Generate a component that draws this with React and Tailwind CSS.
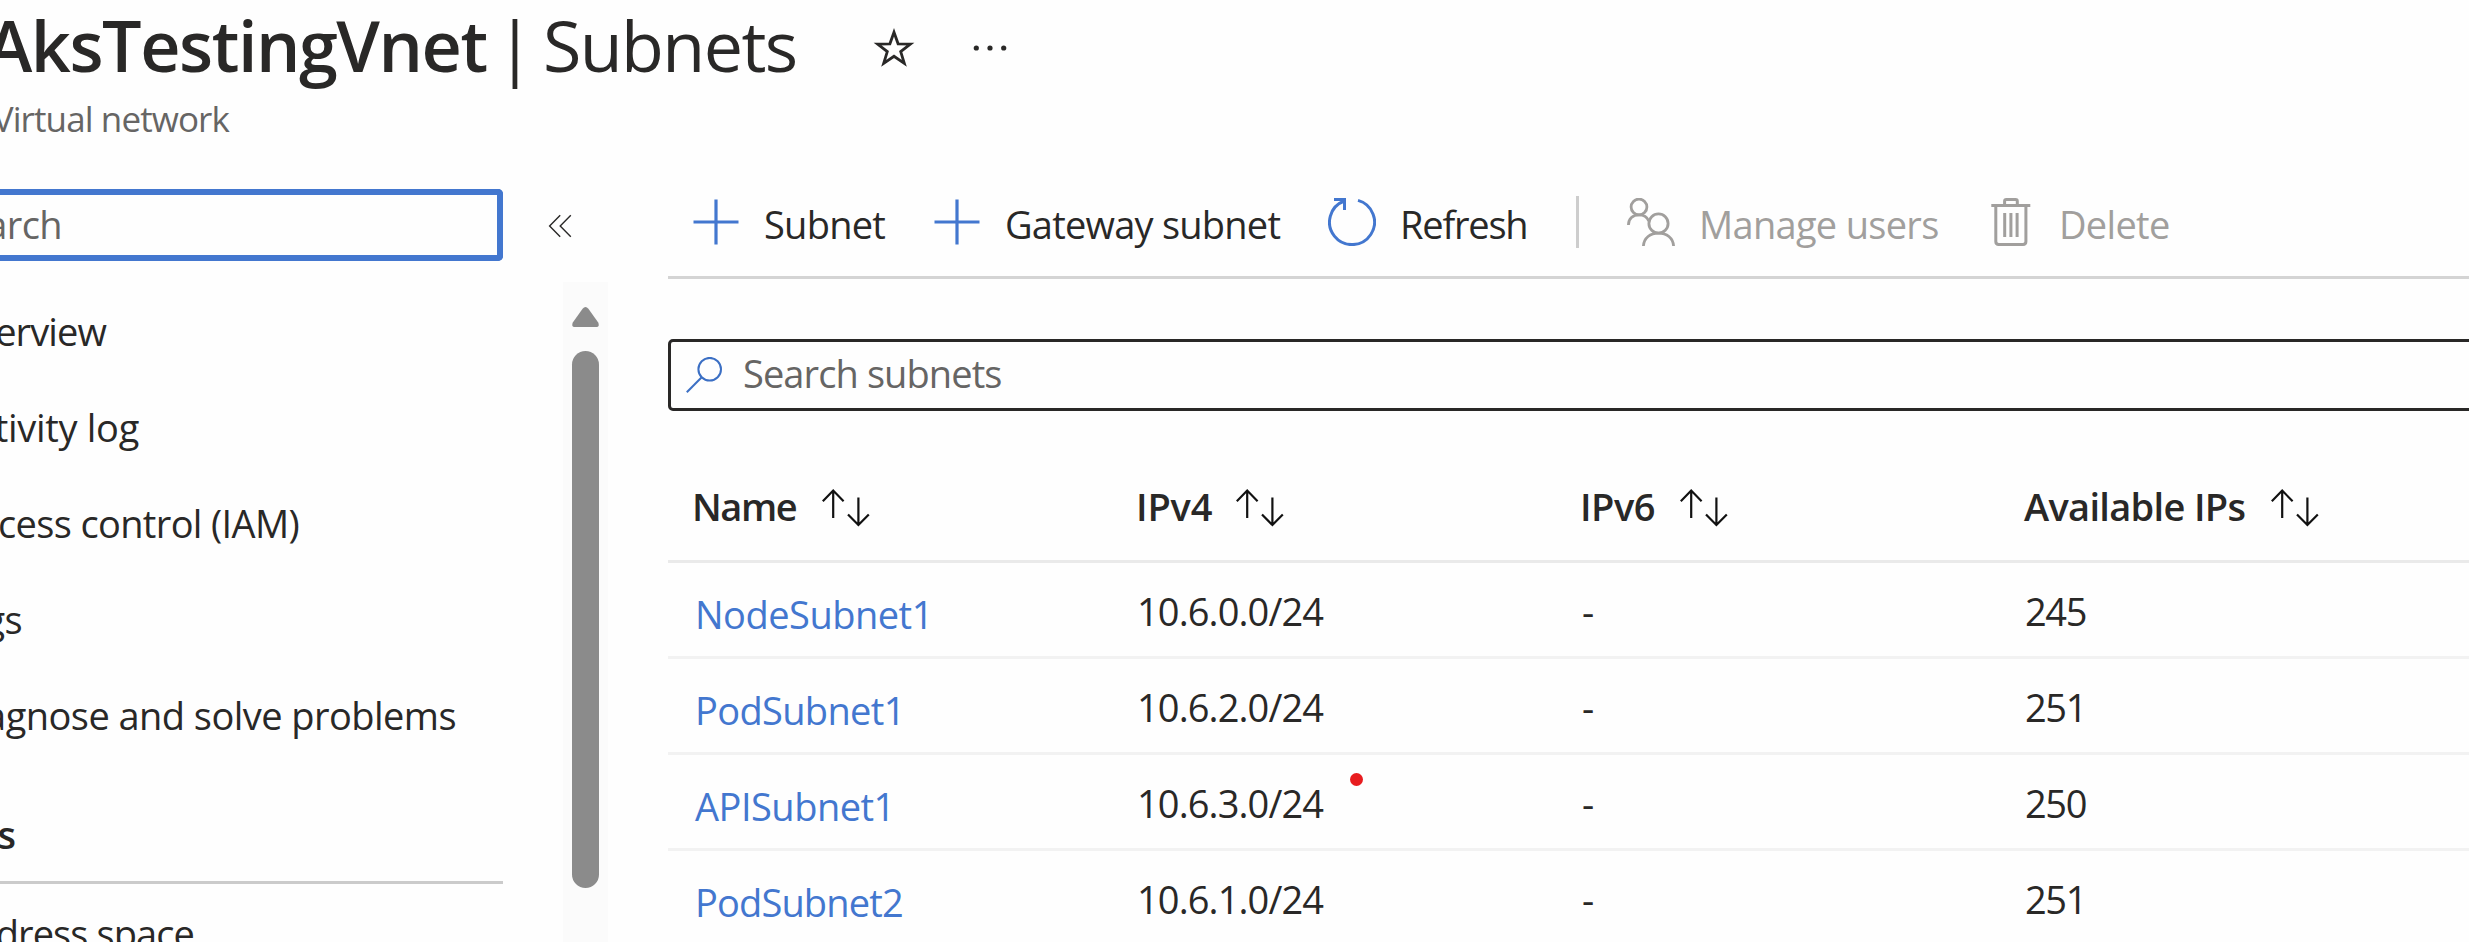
import React from "react";

const NAV_ITEMS = [
  { label: "erview", width: "w-[106px]", tracking: "tracking-[-0.9px]" },
  { label: "tivity log", width: "w-[139px]", tracking: "tracking-[-0.3px]" },
  { label: "cess control (IAM)", width: "w-[299px]", tracking: "tracking-[-0.65px]" },
  { label: "gs", width: "w-[22px]", tracking: "tracking-[-0.6px]" },
  { label: "agnose and solve problems", width: "w-[456px]", tracking: "tracking-[-0.55px]" },
];

const COLUMNS = [
  { label: "Name", tracking: "tracking-[-1.4px]", gap: "gap-[26px]" },
  { label: "IPv4", tracking: "tracking-[-0.2px]", gap: "gap-[24px]" },
  { label: "IPv6", tracking: "tracking-[-0.5px]", gap: "gap-[25px]" },
  { label: "Available IPs", tracking: "tracking-[-0.68px]", gap: "gap-[26px]" },
];

const ROWS = [
  { name: "NodeSubnet1", tracking: "tracking-[-0.5px]", ipv4: "10.6.0.0/24", ips: "245" },
  { name: "PodSubnet1", tracking: "tracking-[-0.65px]", ipv4: "10.6.2.0/24", ips: "251" },
  { name: "APISubnet1", tracking: "tracking-[-0.5px]", ipv4: "10.6.3.0/24", ips: "250", marker: true },
  { name: "PodSubnet2", tracking: "tracking-[-0.85px]", ipv4: "10.6.1.0/24", ips: "251" },
];

const GRID = "grid grid-cols-[444px_444px_444px_1fr] pl-[24px]";

function StarIcon() {
  return (
    <svg className="h-12 w-12" viewBox="0 0 48 48" fill="none" stroke="#292827" strokeWidth="2.8" strokeMiterlimit="10">
      <path d="M24 8.2 L28.1 19.8 L40.4 20.1 L30.7 27.6 L34.3 39.4 L24 32.3 L13.7 39.4 L17.3 27.6 L7.6 20.1 L19.9 19.8 Z" />
    </svg>
  );
}

function MoreIcon() {
  return (
    <svg className="h-3 w-9" viewBox="0 0 36 12" fill="#292827">
      <circle cx="4.3" cy="6" r="2.6" />
      <circle cx="18" cy="6" r="2.6" />
      <circle cx="31.7" cy="6" r="2.6" />
    </svg>
  );
}

function CollapseIcon() {
  return (
    <svg className="h-6 w-6" viewBox="0 0 24 24" fill="none" stroke="#292827" strokeWidth="1.4">
      <path d="M12.2 1.2 L1.6 12 L12.2 22.8 M22.8 1.2 L12.2 12 L22.8 22.8" />
    </svg>
  );
}

function PlusIcon() {
  return (
    <svg className="h-[46px] w-[46px]" viewBox="0 0 46 46" fill="none" stroke="#4377cf" strokeWidth="3.2">
      <path d="M23 0.5 V45.5 M0.5 23 H45.5" />
    </svg>
  );
}

function RefreshIcon() {
  return (
    <svg className="h-12 w-12" viewBox="0 0 48 48" fill="none" stroke="#4377cf" strokeWidth="3">
      <path d="M30 2.4 A22.5 22.5 0 1 1 16.2 3" />
      <path d="M6 1.5 H16.5 V12" />
    </svg>
  );
}

function PeopleIcon() {
  return (
    <svg className="h-12 w-12" viewBox="0 0 48 48" fill="none" stroke="#a19f9d" strokeWidth="2.8">
      <circle cx="12" cy="9" r="7.9" />
      <path d="M1.4 27 C1.4 20.5 6 16.9 12 16.9 C16.6 16.9 20.2 19.2 21.8 23" />
      <circle cx="31.5" cy="25.5" r="9.6" />
      <path d="M16.4 48 C16.9 39.8 23.3 35.1 31.5 35.1 C39.7 35.1 46.1 39.8 46.6 48" />
    </svg>
  );
}

function TrashIcon() {
  return (
    <svg className="h-12 w-10" viewBox="0 0 40 48" fill="none" stroke="#a19f9d" strokeWidth="3">
      <path d="M0.3 7.5 H39.3" />
      <path d="M13.6 7.5 V3.2 Q13.6 1.5 15.3 1.5 H24.6 Q26.3 1.5 26.3 3.2 V7.5" />
      <path d="M4.8 7.5 V43.6 Q4.8 46.5 7.7 46.5 H32 Q34.9 46.5 34.9 43.6 V7.5" />
      <path d="M13.7 15 V39 M19.9 15 V39 M26.1 15 V39" />
    </svg>
  );
}

function SearchIcon() {
  return (
    <svg className="h-9 w-9" viewBox="0 0 36 36" fill="none" stroke="#3b6fc4" strokeWidth="2">
      <circle cx="23.7" cy="12.2" r="11.3" />
      <path d="M15.7 20.2 L0.8 35.2" />
    </svg>
  );
}

function SortIcon() {
  return (
    <svg className="h-[38px] w-12" viewBox="0 0 48 38" fill="none" stroke="#111" strokeWidth="2.2">
      <path d="M11.2 29 V1.6 M0.8 12.2 L11.2 1.6 L21.6 12.2" />
      <path d="M36.4 8.5 V36 M26 25.4 L36.4 36 L46.8 25.4" />
    </svg>
  );
}

function Header() {
  return (
    <header className="flex h-[189px] shrink-0 flex-col">
      <div className="flex h-[91px] items-center text-[70px] leading-[91px] text-[#292827]">
        <h1 className="-ml-[14px] flex w-[887px] whitespace-pre">
          <span className="w-[512px] font-semibold tracking-[-1.45px]">AksTestingVnet</span>
          <span className="-ml-[7px] mr-[4px] w-[48px] text-center">|</span>
          <span className="tracking-[-1.6px]">Subnets</span>
        </h1>
        <div className="mt-[5px] -ml-[3px]"><StarIcon /></div>
        <div className="mt-[5px] ml-[54px] flex"><MoreIcon /></div>
      </div>
      <p className="flex h-[56px] w-[229px] items-center justify-end whitespace-nowrap text-[35px] leading-[56px] tracking-[-0.9px] text-[#666564]">
        Virtual network
      </p>
    </header>
  );
}

function Sidebar() {
  return (
    <aside className="flex w-[608px] shrink-0 flex-col">
      <div className="flex h-[72px] shrink-0 items-center">
        <div className="flex h-[72px] w-[503px] items-center rounded-r-[5px] border-y-[6px] border-r-[6px] border-[#4377cf] pb-[3px]">
          <div className="flex w-[62px] justify-end text-[38px] leading-[56px] tracking-[-0.6px] text-[#666564]">arch</div>
        </div>
        <div className="ml-[45px] mt-[2px]"><CollapseIcon /></div>
      </div>
      <div className="mt-[21px] flex min-h-0 flex-1 justify-between">
        <nav className="flex w-[503px] flex-col whitespace-nowrap pt-px text-[38px] text-[#292827]">
          {NAV_ITEMS.map((item) => (
            <div key={item.label} className={`flex h-24 shrink-0 items-center justify-end ${item.width} ${item.tracking}`}>
              {item.label}
            </div>
          ))}
          <div className="flex h-[121px] shrink-0 flex-col justify-end border-b-[3px] border-[#cbcbcb] pb-[19px]">
            <div className="flex w-[16px] justify-end leading-[56px] font-semibold">s</div>
          </div>
          <div className="flex h-24 w-[194px] shrink-0 items-center justify-end pt-[2px] tracking-[-0.9px]">dress space</div>
        </nav>
        <div className="flex w-[45px] flex-col items-center bg-[#fbfbfb] pt-[25px]">
          <svg className="h-5 w-[27px]" viewBox="0 0 27 20" fill="#8b8b8b">
            <path d="M10.6 1.8 Q13.5 -1.6 16.4 1.8 L26.2 15.6 Q28 20 24 20 H3 Q-1 20 0.8 15.6 Z" />
          </svg>
          <div className="mt-[24px] h-[537px] w-[27px] shrink-0 rounded-full bg-[#8b8b8b]" />
        </div>
      </div>
    </aside>
  );
}

function Toolbar() {
  return (
    <div className="flex h-[90px] shrink-0 items-center whitespace-nowrap border-b-[3px] border-[#d4d4d4] pb-[21px] pl-[25px] text-[38px] leading-[60px] text-[#292827]">
      <PlusIcon />
      <span className="ml-[25px] w-[170px] pt-[3px] tracking-[-0.75px]">Subnet</span>
      <PlusIcon />
      <span className="ml-[25px] w-[323px] pt-[3px] tracking-[-0.77px]">Gateway subnet</span>
      <RefreshIcon />
      <span className="ml-[24px] w-[176px] pt-[3px] tracking-[-1.2px]">Refresh</span>
      <div className="h-[52px] w-[3px] bg-[#cdcdcd]" />
      <div className="ml-[48px]"><PeopleIcon /></div>
      <span className="ml-[24px] w-[292px] pt-[3px] tracking-[-0.7px] text-[#a19f9d]">Manage users</span>
      <TrashIcon />
      <span className="ml-[28px] pt-[3px] tracking-[-0.7px] text-[#a19f9d]">Delete</span>
    </div>
  );
}

function SubnetTable() {
  return (
    <div className="mt-[53px] whitespace-nowrap text-[38px] text-[#292827]">
      <div className={`${GRID} h-[99px] border-b-[3px] border-[#eaeaea] font-semibold`}>
        {COLUMNS.map((col) => (
          <div key={col.label} className={`flex h-[84px] items-center ${col.gap}`}>
            <span className={col.tracking}>{col.label}</span>
            <div className="mt-1"><SortIcon /></div>
          </div>
        ))}
      </div>
      {ROWS.map((row) => (
        <div key={row.name} className={`${GRID} h-24 border-b-[3px] border-[#f2f2f2] leading-[97px]`}>
          <a className={`pt-[3px] pl-[3px] text-[#4377cf] ${row.tracking}`}>{row.name}</a>
          <span className="relative pl-px tracking-[-0.9px]">
            {row.ipv4}
            {row.marker && <i className="absolute top-[18px] left-[214px] h-[13px] w-[13px] rounded-full bg-[#e81c1f]" />}
          </span>
          <span className="pl-[2px]">-</span>
          <span className="pl-px tracking-[-1.4px]">{row.ips}</span>
        </div>
      ))}
    </div>
  );
}

export default function App() {
  return (
    <div className="flex h-[942px] w-[2469px] flex-col overflow-hidden bg-[#fefefe] font-['Open_Sans','Noto_Sans',sans-serif]">
      <Header />
      <div className="flex min-h-0 flex-1">
        <Sidebar />
        <main className="ml-[60px] min-w-0 flex-1 overflow-hidden">
          <Toolbar />
          <div className="mt-[60px] flex h-[72px] w-[1820px] items-center rounded-[5px] border-[3px] border-[#292827] pl-[15px]">
            <SearchIcon />
            <span className="mb-[3px] ml-[21px] text-[38px] tracking-[-0.9px] text-[#666564]">Search subnets</span>
          </div>
          <SubnetTable />
        </main>
      </div>
    </div>
  );
}
